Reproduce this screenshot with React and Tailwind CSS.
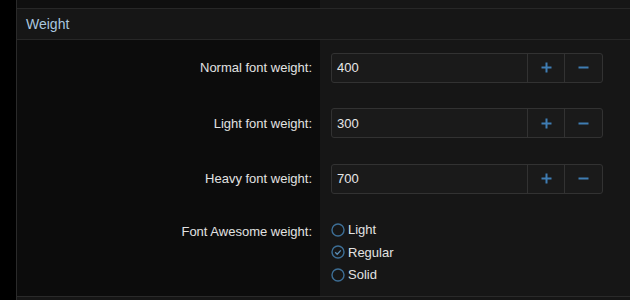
const rows = [
  { label: 'Normal font weight:', value: '400' },
  { label: 'Light font weight:', value: '300' },
  { label: 'Heavy font weight:', value: '700' },
];

const options = [
  { name: 'Light', checked: false },
  { name: 'Regular', checked: true },
  { name: 'Solid', checked: false },
];

const Plus = () => (
  <svg width="11" height="11" viewBox="0 0 11 11">
    <path d="M5.5 0.5v10M0.5 5.5h10" stroke="#3f7db3" strokeWidth="2" />
  </svg>
);

const Minus = () => (
  <svg width="11" height="11" viewBox="0 0 11 11">
    <path d="M0.5 5.5h10" stroke="#3f7db3" strokeWidth="2" />
  </svg>
);

const Radio = ({ checked }) => (
  <svg width="14" height="14" viewBox="0 0 14 14">
    <circle cx="7" cy="7" r="6" fill="none" stroke="#3d6e95" strokeWidth="1.4" />
    {checked && <path d="M4.2 7.2l2 2 3.6-3.8" fill="none" stroke="#5b8db5" strokeWidth="1.3" />}
  </svg>
);

const App = () => {
  return (
    <div
      className="w-[630px] h-[300px] bg-black flex overflow-hidden text-[13px] text-[#e2e2e2]"
      style={{ fontFamily: '"Liberation Sans", Arial, sans-serif' }}
    >
      <div className="w-4 shrink-0 bg-black" />
      <div className="flex-1 flex flex-col border-l border-[#2a2a2a]">
        {/* top strip */}
        <div className="h-2 flex">
          <div className="w-[303px] bg-[#0f0f0f]" />
          <div className="flex-1 bg-[#161616]" />
        </div>

        {/* header */}
        <div className="h-8 flex items-center px-[9px] bg-[#161616] border-y border-[#272727]">
          <span className="text-[14px] text-[#a9c7df]">Weight</span>
        </div>

        {/* body */}
        <div className="flex">
          <div className="w-[303px] bg-[#0c0c0c] flex flex-col">
            {rows.map((r) => (
              <div key={r.label} className="h-[55.5px] flex items-center justify-end pr-2">
                {r.label}
              </div>
            ))}
            <div className="h-[89px] flex justify-end pr-2 pt-[15px]">Font Awesome weight:</div>
          </div>
          <div className="flex-1 bg-[#161616] pl-[11px] flex flex-col">
            {rows.map((r) => (
              <div key={r.label} className="h-[55.5px] flex items-center">
                <div className="w-[272px] h-[30px] flex border border-[#323232] rounded-[3px] bg-[#1a1a1a]">
                  <div className="flex-1 flex items-center pl-[5px] text-[#e8e8e8]">{r.value}</div>
                  <div className="w-[37px] flex items-center justify-center border-l border-[#323232]">
                    <Plus />
                  </div>
                  <div className="w-[38px] flex items-center justify-center border-l border-[#323232]">
                    <Minus />
                  </div>
                </div>
              </div>
            ))}
            <div className="h-[89px] flex flex-col pt-[12px]">
              {options.map((o) => (
                <div key={o.name} className="h-[22.5px] flex items-center gap-[3px]">
                  <Radio checked={o.checked} />
                  <span>{o.name}</span>
                </div>
              ))}
            </div>
          </div>
        </div>
        <div className="flex-1 border-t border-[#2a2a2a] bg-[#161616]" />
      </div>
    </div>
  );
};

export default App;
